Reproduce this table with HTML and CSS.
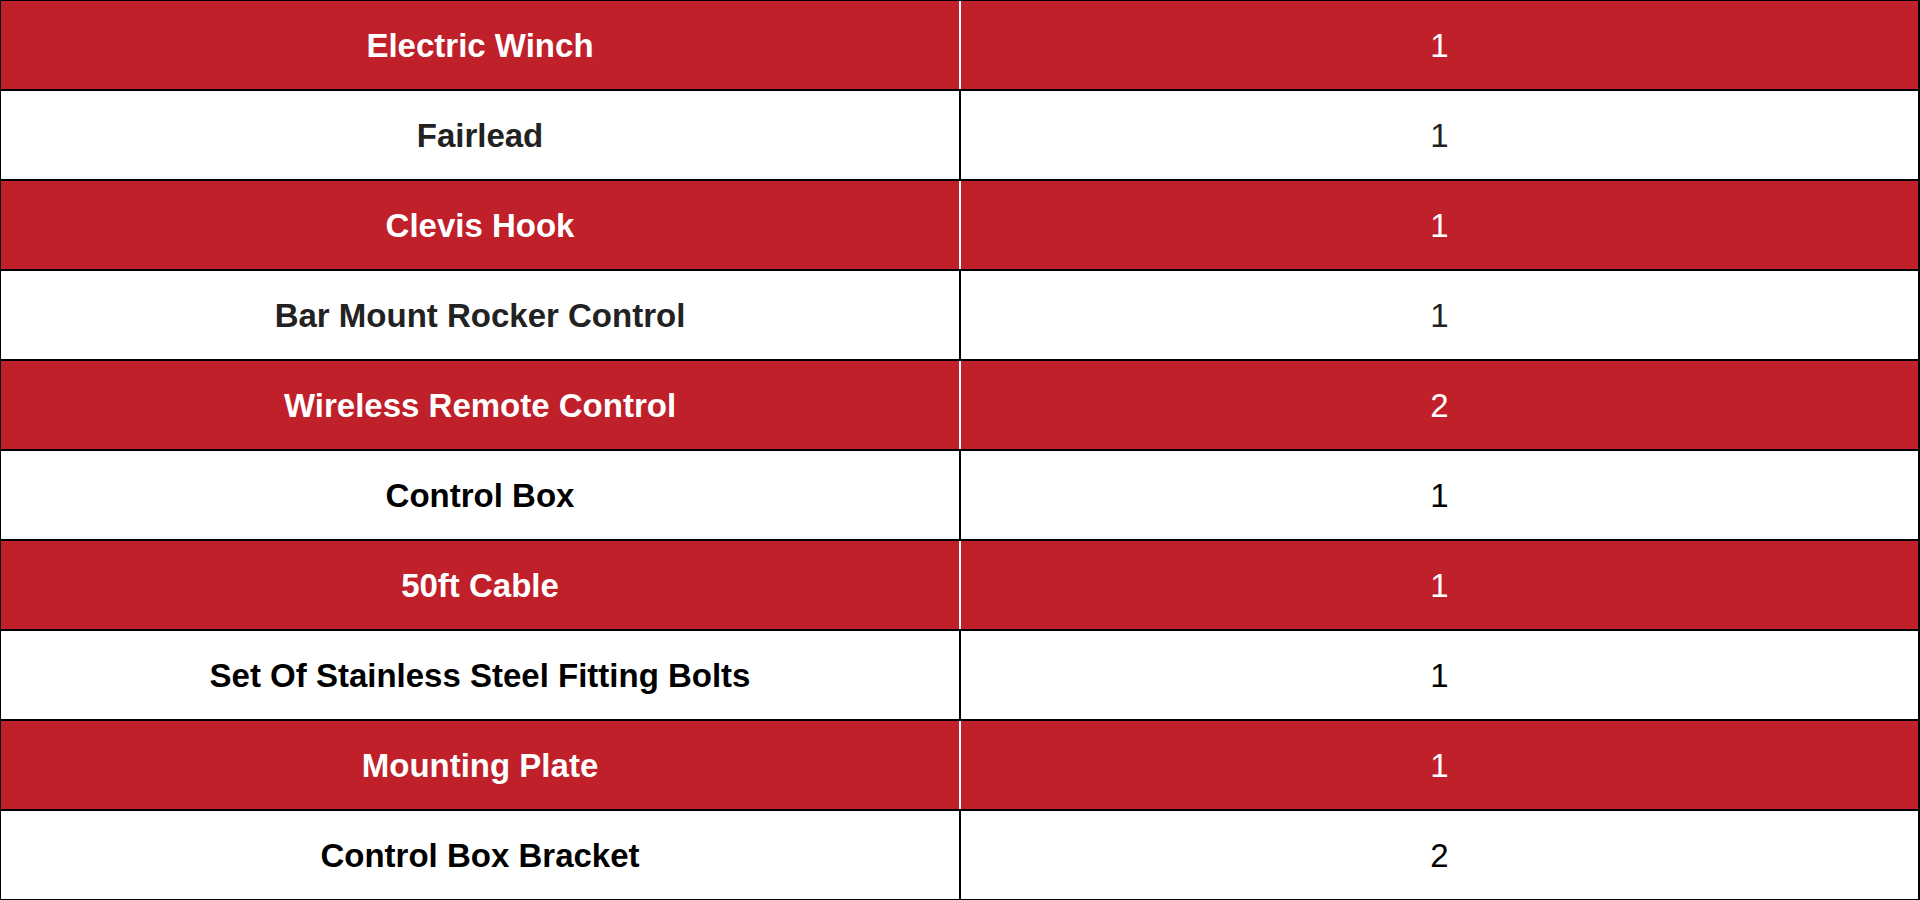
FILE: index.html
```html
<!DOCTYPE html>
<html>
<head>
<meta charset="utf-8">
<link rel="stylesheet" href="styles.css">
</head>
<body>
<div class="parts">
  <div class="row red"><div class="name">Electric Winch</div><div class="qty">1</div></div>
  <div class="row white grey"><div class="name">Fairlead</div><div class="qty">1</div></div>
  <div class="row red"><div class="name">Clevis Hook</div><div class="qty">1</div></div>
  <div class="row white grey"><div class="name">Bar Mount Rocker Control</div><div class="qty">1</div></div>
  <div class="row red"><div class="name">Wireless Remote Control</div><div class="qty">2</div></div>
  <div class="row white"><div class="name">Control Box</div><div class="qty">1</div></div>
  <div class="row red"><div class="name">50ft Cable</div><div class="qty">1</div></div>
  <div class="row white"><div class="name">Set Of Stainless Steel Fitting Bolts</div><div class="qty">1</div></div>
  <div class="row red"><div class="name">Mounting Plate</div><div class="qty">1</div></div>
  <div class="row white"><div class="name">Control Box Bracket</div><div class="qty">2</div></div>
</div>
</body>
</html>
```
FILE: styles.css
```css
html, body {
  margin: 0;
  padding: 0;
  background: #fff;
  overflow: hidden;
}
body {
  font-family: "Liberation Sans", Arial, sans-serif;
}
.parts {
  width: 1920px;
  box-sizing: border-box;
  border-top: 1px solid #000;
  border-left: 1px solid #000;
  border-right: 2px solid #000;
}
.row {
  display: grid;
  grid-template-columns: 960px 1fr;
  height: 90px;
  box-sizing: border-box;
  border-bottom: 2px solid #000;
}
.row > div {
  display: flex;
  align-items: center;
  justify-content: center;
  font-size: 33px;
  padding-top: 2px;
  box-sizing: border-box;
}
.name {
  font-weight: bold;
  border-right: 2px solid #000;
}
.qty {
  font-weight: normal;
}
.red {
  background: #bf202a;
  color: #fff;
}
.red .name {
  border-right-color: #fff;
}
.white {
  background: #fff;
  color: #000;
}
.white.grey {
  color: #222;
}
```
